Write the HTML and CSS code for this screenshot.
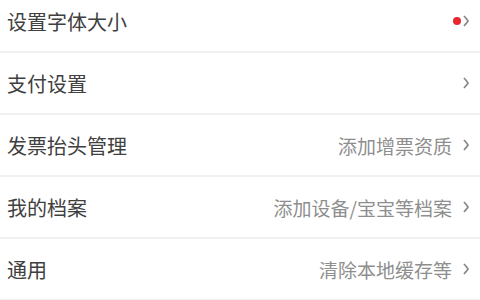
FILE: index.html
```html
<!DOCTYPE html>
<html lang="zh-CN">
<head>
    <meta charset="UTF-8">
    <meta name="viewport" content="width=device-width, initial-scale=1.0">
    <title>设置</title>
    <link rel="stylesheet" href="styles.css">
</head>
<body>
    <ul class="menu">
        <li class="item">
            <span class="label">设置字体大小</span>
            <span class="extra">
                <i class="dot"></i>
                <svg class="arrow" width="6" height="12" viewBox="0 0 6 12"><path d="M1 1 Q4.5 5 5 6 Q4.5 7 1 11" fill="none" stroke="#8a8a8a" stroke-width="1.7"/></svg>
            </span>
        </li>
        <li class="item">
            <span class="label">支付设置</span>
            <span class="extra">
                <svg class="arrow" width="6" height="12" viewBox="0 0 6 12"><path d="M1 1 Q4.5 5 5 6 Q4.5 7 1 11" fill="none" stroke="#8a8a8a" stroke-width="1.7"/></svg>
            </span>
        </li>
        <li class="item">
            <span class="label">发票抬头管理</span>
            <span class="extra">
                <span class="value">添加增票资质</span>
                <svg class="arrow" width="6" height="12" viewBox="0 0 6 12"><path d="M1 1 Q4.5 5 5 6 Q4.5 7 1 11" fill="none" stroke="#8a8a8a" stroke-width="1.7"/></svg>
            </span>
        </li>
        <li class="item">
            <span class="label">我的档案</span>
            <span class="extra">
                <span class="value">添加设备/宝宝等档案</span>
                <svg class="arrow" width="6" height="12" viewBox="0 0 6 12"><path d="M1 1 Q4.5 5 5 6 Q4.5 7 1 11" fill="none" stroke="#8a8a8a" stroke-width="1.7"/></svg>
            </span>
        </li>
        <li class="item">
            <span class="label">通用</span>
            <span class="extra">
                <span class="value">清除本地缓存等</span>
                <svg class="arrow" width="6" height="12" viewBox="0 0 6 12"><path d="M1 1 Q4.5 5 5 6 Q4.5 7 1 11" fill="none" stroke="#8a8a8a" stroke-width="1.7"/></svg>
            </span>
        </li>
    </ul>
</body>
</html>
```

FILE: styles.css
```css
body {
    margin: 0;
    background: #fff;
    font-family: "Noto Sans CJK SC", "Noto Sans", sans-serif;
    overflow: hidden;
}
.menu {
    list-style: none;
    margin: -9px 0 0;
    padding: 0;
}
.item {
    display: flex;
    align-items: center;
    justify-content: space-between;
    height: 60px;
    padding: 0 11px 0 7px;
    border-bottom: 2px solid #f1f1f1;
}
.label {
    font-size: 20px;
    color: #404040;
}
.extra {
    display: flex;
    align-items: center;
}
.value {
    font-size: 19px;
    color: #8e8e8e;
    margin-right: 11px;
}
.dot {
    width: 8px;
    height: 8px;
    border-radius: 50%;
    background: #e8262b;
    margin-right: 2px;
}
.arrow {
    display: block;
}
```
